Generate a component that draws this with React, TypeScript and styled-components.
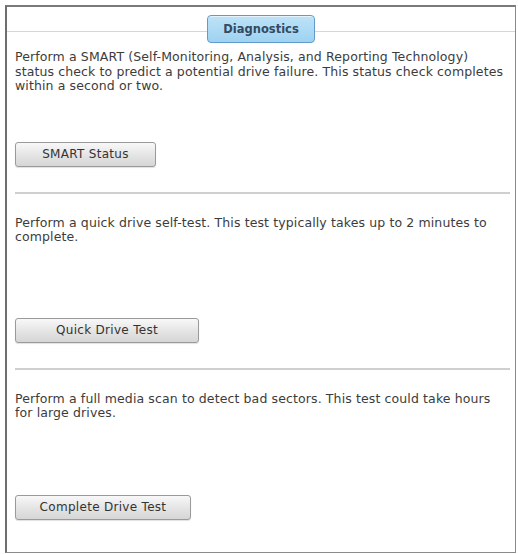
import React from 'react'
import styled, { createGlobalStyle } from 'styled-components'

const GlobalStyle = createGlobalStyle`
  html, body {
    margin: 0;
    padding: 0;
    background: #ffffff;
  }
  body {
    font-family: 'DejaVu Sans', Verdana, sans-serif;
  }
`

type Test = {
  text: string
  button: string
  buttonWidth: number
  gap: number
  last?: boolean
}

const tests: Test[] = [
  {
    text: 'Perform a SMART (Self-Monitoring, Analysis, and Reporting Technology) status check to predict a potential drive failure. This status check completes within a second or two.',
    button: 'SMART Status',
    buttonWidth: 141,
    gap: 48,
  },
  {
    text: 'Perform a quick drive self-test. This test typically takes up to 2 minutes to complete.',
    button: 'Quick Drive Test',
    buttonWidth: 184,
    gap: 73,
  },
  {
    text: 'Perform a full media scan to detect bad sectors. This test could take hours for large drives.',
    button: 'Complete Drive Test',
    buttonWidth: 176,
    gap: 74,
    last: true,
  },
]

const App: React.FC = () => {
  return (
    <>
      <GlobalStyle />
      <StyledPanel>
        <StyledHeader>
          <StyledHeaderRule />
          <StyledTab>Diagnostics</StyledTab>
          <StyledHeaderRule />
        </StyledHeader>

        <StyledBody>
          {tests.map((t, i) => (
            <StyledSection key={t.button} $first={i === 0}>
              <StyledText>{t.text}</StyledText>
              <StyledButton $width={t.buttonWidth} $gap={t.gap}>
                {t.button}
              </StyledButton>
              {!t.last && <StyledDivider />}
            </StyledSection>
          ))}
        </StyledBody>
      </StyledPanel>
    </>
  )
}

const StyledPanel = styled.div`
  margin: 5px 2px 0 5px;
  height: 548px;
  box-sizing: border-box;
  border: 1px solid #8a8a8a;
  border-left: 2px solid #6e6e6e;
  border-top: 2px solid #7a7a7a;
  background: #ffffff;
  display: flex;
  flex-direction: column;
`

const StyledHeader = styled.div`
  display: flex;
  align-items: center;
  padding-top: 8px;
`

const StyledHeaderRule = styled.div`
  flex: 1;
  height: 1px;
  margin-top: 5px;
  background: #d6d6d6;
`

const StyledTab = styled.div`
  width: 108px;
  height: 28px;
  box-sizing: border-box;
  display: flex;
  align-items: center;
  justify-content: center;
  border: 1px solid #5f9ccb;
  border-radius: 4px;
  background: linear-gradient(#bde3f8, #9ed2f1);
  box-shadow: inset 0 1px 0 rgba(255, 255, 255, 0.6);
  color: #34495f;
  font-size: 11.5px;
  font-weight: bold;
`

const StyledBody = styled.div`
  padding: 0 4px 0 8px;
`

const StyledSection = styled.div<{ $first?: boolean }>`
  display: flex;
  flex-direction: column;
  align-items: flex-start;
  padding-top: ${(props) => (props.$first ? '7px' : '22px')};
`

const StyledText = styled.p`
  margin: 0;
  font-size: 12.5px;
  line-height: 14.5px;
  letter-spacing: 0.12px;
  color: #3c3c3c;
`

const StyledButton = styled.button<{ $width: number; $gap: number }>`
  width: ${(props) => props.$width}px;
  height: 25px;
  margin-top: ${(props) => props.$gap}px;
  padding: 0;
  border: 1px solid #9a9a9a;
  border-radius: 3px;
  background: linear-gradient(#f8f8f8, #e2e2e2 60%, #d6d6d6);
  box-shadow: 0 1px 1px rgba(0, 0, 0, 0.12);
  font-family: 'DejaVu Sans', Verdana, sans-serif;
  font-size: 12px;
  letter-spacing: 0.3px;
  color: #333333;
  cursor: pointer;
`

const StyledDivider = styled.div`
  align-self: stretch;
  height: 2px;
  margin: 25px 1px 0 0;
  background: #cfcfcf;
`

export default App
